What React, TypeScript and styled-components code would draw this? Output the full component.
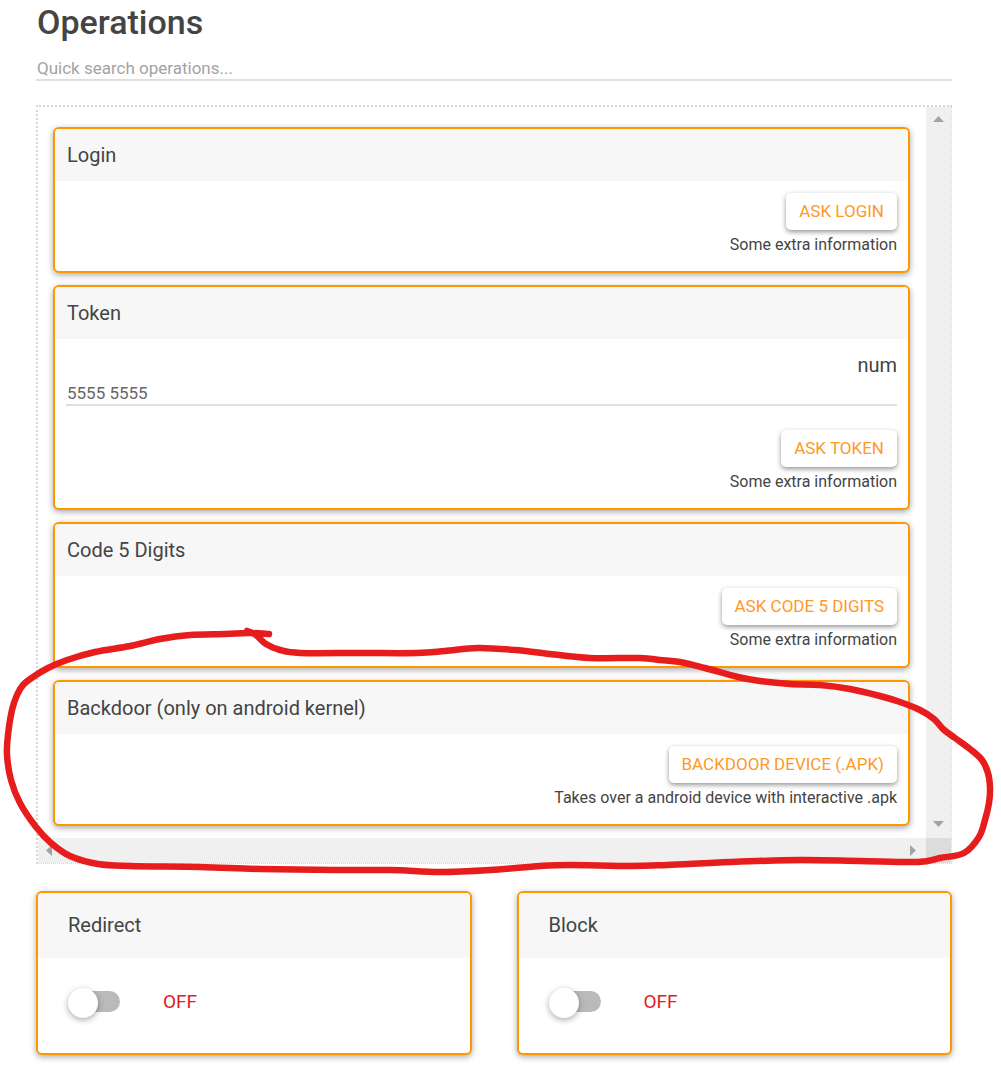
import React, { useId, useState } from "react";
import styled, { createGlobalStyle } from "styled-components";

const GlobalStyle = createGlobalStyle`
  *, *::before, *::after { box-sizing: border-box; }
  body {
    margin: 0;
    background: #fff;
    color: #444;
    font-family: Roboto, "Liberation Sans", sans-serif;
  }
`;

const Page = styled.main`
  position: relative;
  padding: 2px 49px 33px 36px;
`;

const PageTitle = styled.h1`
  margin: 0;
  padding-left: 1px;
  font-size: 34px;
  font-weight: 500;
  line-height: 40px;
`;

const TextInput = styled.input`
  display: block;
  width: 100%;
  height: 26px;
  padding: 2px 0 0 1px;
  border: 0;
  border-bottom: 2px solid #dfdfdf;
  border-radius: 0;
  outline: 0;
  background: transparent;
  color: #666;
  font-family: inherit;
  font-size: 17px;
  &::placeholder {
    color: #a3a3a3;
    opacity: 1;
  }
`;

const Search = styled.div`
  padding: 13px 0 24px;
`;

const Frame = styled.section`
  display: grid;
  grid-template-columns: 1fr 25px;
  grid-template-rows: auto 25px;
  border: 2px dotted #d6d6d6;
  border-right-width: 1px;
  border-bottom-width: 1px;
`;

const CardList = styled.div`
  display: flex;
  flex-direction: column;
  gap: 12px;
  padding: 20px 16px 12px 15px;
`;

const ScrollTrack = styled.div<{ $horizontal?: boolean }>`
  display: flex;
  flex-direction: ${(p) => (p.$horizontal ? "row" : "column")};
  align-items: center;
  justify-content: space-between;
  padding: ${(p) => (p.$horizontal ? "0 10px 0 8px" : "9px 0 11px")};
  background: #f0f0f0;
`;

const ScrollCorner = styled.div`
  background: #dcdcdc;
`;

const Card = styled.article`
  border: 2px solid #ff9800;
  border-radius: 6px;
  background: #fff;
  box-shadow: 0 2px 6px rgba(0, 0, 0, 0.34);
`;

const CardTitle = styled.h2<{ $roomy?: boolean }>`
  margin: 0;
  padding: 0 ${(p) => (p.$roomy ? 30 : 12)}px;
  border-radius: 4px 4px 0 0;
  background: #f7f7f7;
  font-size: 20px;
  font-weight: 400;
  line-height: ${(p) => (p.$roomy ? 65 : 52)}px;
`;

const CardBody = styled.div`
  display: flex;
  flex-direction: column;
  align-items: flex-end;
  padding: 12px 11px 11px;
`;

const Field = styled.div`
  width: 100%;
  padding-bottom: 24px;
`;

const FieldLabel = styled.label`
  display: block;
  font-size: 20px;
  line-height: 29px;
  text-align: right;
`;

const ActionButton = styled.button`
  height: 37px;
  padding: 0 13px 1px;
  border: 0;
  border-radius: 5px;
  background: #fff;
  box-shadow: 0 2px 5px rgba(0, 0, 0, 0.42);
  color: #ff9826;
  font-family: inherit;
  font-size: 17px;
  text-transform: uppercase;
  cursor: pointer;
`;

const Note = styled.p`
  margin: 0;
  font-size: 16px;
  line-height: 30px;
`;

const SwitchGrid = styled.section`
  display: grid;
  grid-template-columns: 1fr 1fr;
  gap: 45px;
  padding-top: 27px;
`;

const SwitchBody = styled.div`
  display: flex;
  align-items: center;
  gap: 43px;
  padding: 28px 30px 36px;
`;

const Toggle = styled.input`
  position: relative;
  flex: none;
  width: 50px;
  height: 21px;
  margin: 0 0 0 2px;
  border-radius: 11px;
  appearance: none;
  background: #bababa;
  cursor: pointer;
  &::before {
    content: "";
    position: absolute;
    top: -3px;
    left: -2px;
    width: 30px;
    height: 30px;
    border-radius: 50%;
    background: #fff;
    box-shadow: 0 2px 6px rgba(0, 0, 0, 0.34);
  }
  &:checked::before {
    left: 22px;
  }
`;

const ToggleState = styled.label<{ $on: boolean }>`
  color: ${(p) => (p.$on ? "#388e3c" : "#e01b24")};
  font-size: 19px;
  line-height: 31px;
`;

const Drawing = styled.svg`
  position: absolute;
  top: 0;
  left: 0;
  pointer-events: none;
`;

const arrowPoints = {
  up: "0,6 11,6 5.5,0",
  down: "0,0 11,0 5.5,6",
  left: "6,0 6,11 0,5.5",
  right: "0,0 0,11 6,5.5",
};

function Arrow({ dir }: { dir: keyof typeof arrowPoints }) {
  const vertical = dir === "up" || dir === "down";
  return (
    <svg width={vertical ? 11 : 6} height={vertical ? 6 : 11} aria-hidden="true">
      <polygon points={arrowPoints[dir]} fill="#a3a3a3" />
    </svg>
  );
}

type Operation = { title: string; action: string; note: string; field?: { label: string; value: string } };

const operations: Operation[] = [
  { title: "Login", action: "Ask Login", note: "Some extra information" },
  { title: "Token", action: "Ask Token", note: "Some extra information", field: { label: "num", value: "5555 5555" } },
  { title: "Code 5 Digits", action: "Ask Code 5 Digits", note: "Some extra information" },
  {
    title: "Backdoor (only on android kernel)",
    action: "Backdoor Device (.apk)",
    note: "Takes over a android device with interactive .apk",
  },
];

function OperationCard({ title, action, note, field }: Operation) {
  const id = useId();
  return (
    <Card>
      <CardTitle>{title}</CardTitle>
      <CardBody>
        {field && (
          <Field>
            <FieldLabel htmlFor={id}>{field.label}</FieldLabel>
            <TextInput id={id} defaultValue={field.value} />
          </Field>
        )}
        <ActionButton type="button">{action}</ActionButton>
        <Note>{note}</Note>
      </CardBody>
    </Card>
  );
}

function SwitchCard({ title }: { title: string }) {
  const id = useId();
  const [on, setOn] = useState(false);
  return (
    <Card>
      <CardTitle $roomy>{title}</CardTitle>
      <SwitchBody>
        <Toggle id={id} type="checkbox" role="switch" checked={on} onChange={() => setOn(!on)} />
        <ToggleState htmlFor={id} $on={on}>
          {on ? "ON" : "OFF"}
        </ToggleState>
      </SwitchBody>
    </Card>
  );
}

// Pen positions of the hand-drawn loop, in drawing order.
const penPoints: [number, number][] = [
  [269, 634], [250, 633], [225, 634], [190, 635], [160, 639], [130, 646], [95, 652], [67, 660],
  [48, 668], [33, 677], [23, 685], [17, 695], [12, 710], [8, 735], [7, 755], [11, 780], [20, 803],
  [36, 827], [51, 843], [70, 856], [98, 864], [130, 866], [200, 867], [260, 869], [334, 870],
  [390, 870], [440, 872], [490, 870], [540, 866], [570, 865], [630, 866], [667, 865],
  [730, 862], [800, 860], [860, 861], [918, 862], [940, 858], [964, 853], [979, 837], [985, 820],
  [989, 803], [990, 788], [988, 773], [982, 760], [970, 749], [955, 738], [943, 729], [934, 719],
  [920, 710], [900, 702], [880, 696], [850, 689], [820, 685], [790, 684], [760, 681], [738, 677],
  [705, 668], [680, 662], [660, 660], [640, 658], [590, 658], [550, 654], [515, 650], [478, 648],
  [445, 651], [417, 653], [360, 653], [300, 653], [280, 650], [266, 644], [256, 635], [247, 631],
];

function smoothPath(pts: [number, number][]) {
  let d = `M${pts[0][0]} ${pts[0][1]}`;
  for (let i = 0; i < pts.length - 1; i++) {
    const p0 = pts[Math.max(i - 1, 0)];
    const p1 = pts[i];
    const p2 = pts[i + 1];
    const p3 = pts[Math.min(i + 2, pts.length - 1)];
    d += `C${p1[0] + (p2[0] - p0[0]) / 6} ${p1[1] + (p2[1] - p0[1]) / 6} ${p2[0] - (p3[0] - p1[0]) / 6} ${
      p2[1] - (p3[1] - p1[1]) / 6
    } ${p2[0]} ${p2[1]}`;
  }
  return d;
}

export default function App() {
  return (
    <Page>
      <GlobalStyle />
      <PageTitle>Operations</PageTitle>
      <Search>
        <TextInput type="search" aria-label="Quick search operations" placeholder="Quick search operations..." />
      </Search>
      <Frame>
        <CardList>
          {operations.map((op) => (
            <OperationCard key={op.title} {...op} />
          ))}
        </CardList>
        <ScrollTrack>
          <Arrow dir="up" />
          <Arrow dir="down" />
        </ScrollTrack>
        <ScrollTrack $horizontal>
          <Arrow dir="left" />
          <Arrow dir="right" />
        </ScrollTrack>
        <ScrollCorner />
      </Frame>
      <SwitchGrid>
        <SwitchCard title="Redirect" />
        <SwitchCard title="Block" />
      </SwitchGrid>
      <Drawing width="1001" height="900" viewBox="0 0 1001 900" aria-hidden="true">
        <path
          d={smoothPath(penPoints)}
          fill="none"
          stroke="#e71d1d"
          strokeWidth="6.5"
          strokeLinecap="round"
          strokeLinejoin="round"
        />
      </Drawing>
    </Page>
  );
}
